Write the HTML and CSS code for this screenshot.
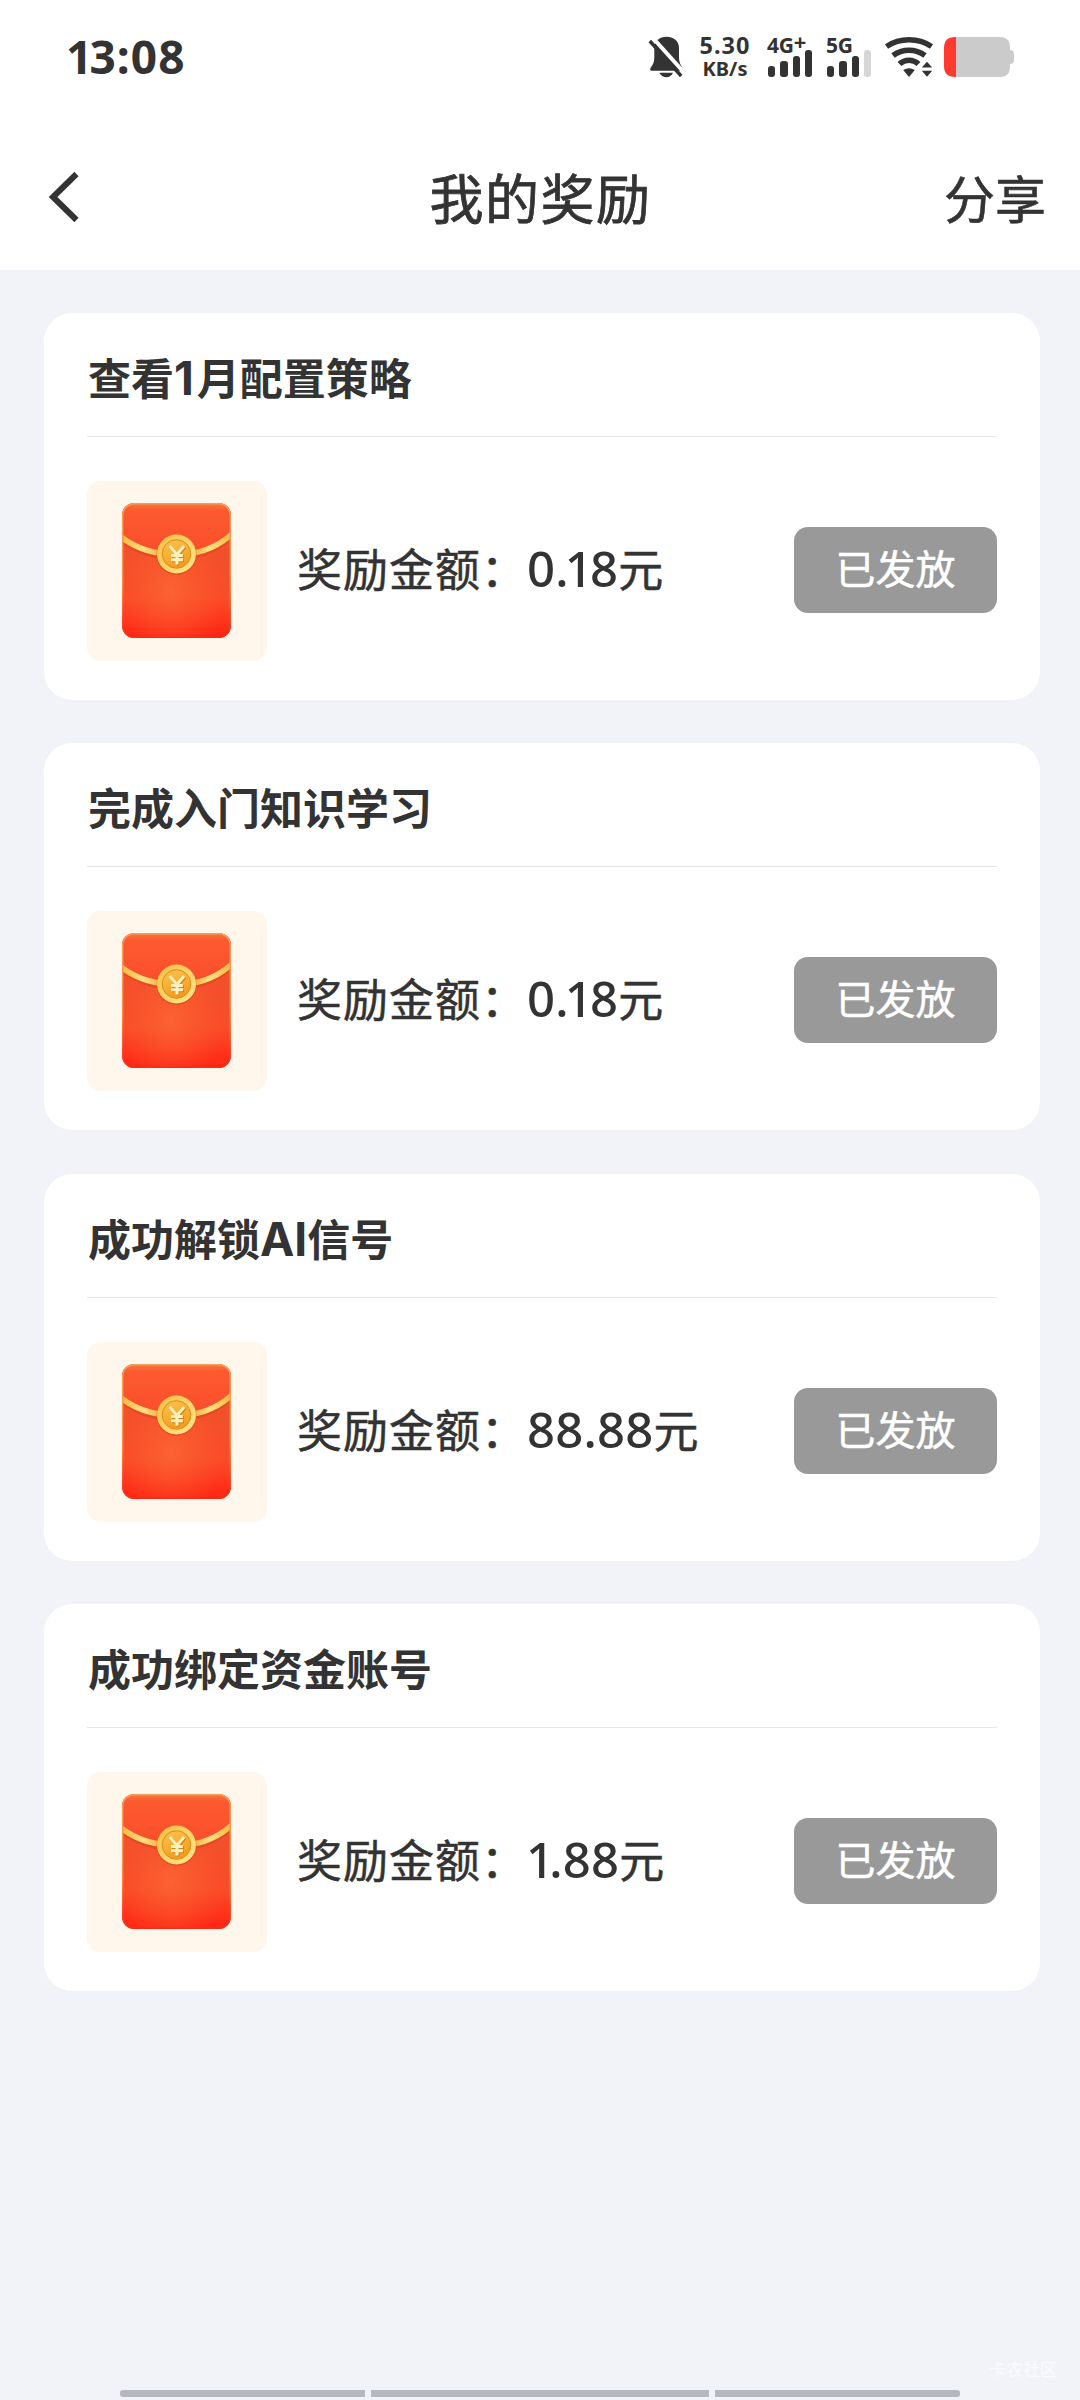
FILE: index.html
```html
<!DOCTYPE html>
<html lang="zh-CN">
<head>
<meta charset="utf-8">
<title>我的奖励</title>
<link rel="stylesheet" href="styles.css">
</head>
<body>
<svg class="defs" width="0" height="0" aria-hidden="true">
  <defs>
    <linearGradient id="env-base" x1="0" y1="0" x2="0" y2="1">
      <stop offset="0" stop-color="#f9602c"/>
      <stop offset=".35" stop-color="#f2502c"/>
      <stop offset=".7" stop-color="#fb4c28"/>
      <stop offset="1" stop-color="#ff2413"/>
    </linearGradient>
    <radialGradient id="env-glow" cx=".45" cy=".65" r=".5">
      <stop offset="0" stop-color="#fc6634" stop-opacity=".85"/>
      <stop offset="1" stop-color="#fa5a2c" stop-opacity="0"/>
    </radialGradient>
    <linearGradient id="env-flap" x1="0" y1="0" x2="0" y2="1">
      <stop offset="0" stop-color="#f6793c"/>
      <stop offset=".14" stop-color="#fd5a30"/>
      <stop offset="1" stop-color="#fa4e2b"/>
    </linearGradient>
    <linearGradient id="env-edge" x1="0" y1="0" x2="0" y2="1">
      <stop offset="0" stop-color="#f3a05c"/>
      <stop offset=".6" stop-color="#ff8a45"/>
      <stop offset="1" stop-color="#ff2a16"/>
    </linearGradient>
    <linearGradient id="band" x1="0" y1="0" x2="1" y2="0">
      <stop offset="0" stop-color="#f9b53c"/>
      <stop offset=".2" stop-color="#ffdf80"/>
      <stop offset=".35" stop-color="#f3b445"/>
      <stop offset=".66" stop-color="#f3b445"/>
      <stop offset=".8" stop-color="#ffdf80"/>
      <stop offset="1" stop-color="#f9b53c"/>
    </linearGradient>
    <linearGradient id="coin-rim" x1="0" y1="0" x2="1" y2="1">
      <stop offset="0" stop-color="#f5bd3c"/>
      <stop offset=".5" stop-color="#fbd367"/>
      <stop offset="1" stop-color="#ffe48a"/>
    </linearGradient>
    <linearGradient id="coin-face" x1="0" y1="0" x2=".4" y2="1">
      <stop offset="0" stop-color="#fbc552"/>
      <stop offset="1" stop-color="#f59c1d"/>
    </linearGradient>
    <clipPath id="env-clip"><rect width="109" height="135" rx="12"/></clipPath>
    <symbol id="envelope" viewBox="0 0 109 135">
      <g clip-path="url(#env-clip)">
        <rect width="109" height="135" fill="url(#env-base)"/>
        <rect width="109" height="135" fill="url(#env-glow)"/>
        <path d="M0 0H109V32Q85 51 54.500 51Q24 51 0 34Z" fill="url(#env-flap)"/>
        <path d="M-1 36Q22 54 54.500 54Q87 54 110 33" fill="none" stroke="#d8401c" stroke-opacity=".5" stroke-width="6"/>
        <path d="M-1 34Q22 51.500 54.500 51.500Q87 51.500 110 31" fill="none" stroke="url(#band)" stroke-width="5.500"/>
        <rect x=".7" y=".7" width="107.600" height="133.600" rx="11.500" fill="none" stroke="url(#env-edge)" stroke-width="1.400"/>
      </g>
      <circle cx="54.500" cy="51.800" r="20" fill="#b93b10" fill-opacity=".45"/>
      <circle cx="54.500" cy="51" r="19.500" fill="url(#coin-rim)"/>
      <circle cx="54.500" cy="51" r="14.300" fill="url(#coin-face)" stroke="#d88d1c" stroke-width="1"/>
      <path d="M47.800 43L55 51.500L62.200 43M55 51.500V61.500M49 52.500H61M49 56.800H61" transform="translate(1 1)" fill="none" stroke="#d67f12" stroke-width="2.800"/>
      <path d="M47.800 43L55 51.500L62.200 43M55 51.500V61.500M49 52.500H61M49 56.800H61" fill="none" stroke="#fff0bd" stroke-width="3"/>
    </symbol>
  </defs>
</svg>

<div class="screen">
  <header class="top">
    <div class="status">
      <span class="clock"><span class="one">1</span>3:08</span>
      <div class="indicators">
        <svg class="bell" viewBox="0 0 36 42">
          <path d="M18.500 .8C25.500 .8 31 5 31 12V21C31 27 33 29 34.500 32Q35 34.800 33 34.800H3.500Q1.500 34.800 2.500 32C4.500 29 6.300 27 6.300 21V12C6.300 5 11.500 .8 18.500 .8Z" fill="#333"/>
          <path d="M11.500 36.800H25Q23 41.200 18.300 41.200Q13.500 41.200 11.500 36.800Z" fill="#333"/>
          <path d="M4 1L37 37.500" stroke="#fff" stroke-width="4"/>
          <path d="M1.800 5L33.200 40" stroke="#333" stroke-width="3.400"/>
        </svg>
        <div class="speed"><span class="rate">5.30</span><span class="unit">KB/s</span></div>
        <div class="signal signal-a">
          <span>4G<sup>+</sup></span>
          <div class="bars"><i class="b1"></i><i class="b2"></i><i class="b3"></i><i class="b4"></i></div>
        </div>
        <div class="signal signal-b">
          <span>5G</span>
          <div class="bars"><i class="b1"></i><i class="b2"></i><i class="b3"></i><i class="b4 off"></i></div>
        </div>
        <svg class="wifi" viewBox="0 0 50 42">
          <g fill="none" stroke="#333" stroke-width="5.600">
            <path d="M2.500 10.500Q12.500 3.800 25 3.800Q37.500 3.800 47.500 10.500"/>
            <path d="M9 19.500Q16 14.200 25 14.200Q34 14.200 41 19.500"/>
            <path d="M15.500 28Q19.500 24.200 25 24.200Q30.500 24.200 34.500 28"/>
          </g>
          <path d="M19.200 34Q25 30.500 30.800 34L25 41Z M43 25.700L48.200 31.500H37.800Z M37.800 34.700H48.200L43 40.700Z" fill="#333"/>
        </svg>
        <svg class="battery" viewBox="0 0 70 40">
          <path d="M12 0H56Q66 0 66 11V13Q70 13 70 17V23Q70 27 66 27V29Q66 40 56 40H12Z" fill="#cbcbcb"/>
          <path d="M12 0V40H11Q0 40 0 29V11Q0 0 11 0Z" fill="#ff3b30"/>
        </svg>
      </div>
    </div>
    <nav class="nav">
      <svg class="back" viewBox="0 0 32 52"><path d="M28.500 3L5 26L28.500 49" fill="none" stroke="#333" stroke-width="6"/></svg>
      <h1>我的奖励</h1>
      <a class="share">分享</a>
    </nav>
  </header>

  <main class="list">
    <section class="card">
      <h2>查看<span class="latin digit">1</span>月配置策略</h2>
      <div class="row">
        <div class="tile"><svg class="envelope"><use href="#envelope"/></svg></div>
        <p class="amount">奖励金额：<b>0.<span class="one">1</span>8</b>元</p>
        <span class="badge">已发放</span>
      </div>
    </section>
    <section class="card">
      <h2>完成入门知识学习</h2>
      <div class="row">
        <div class="tile"><svg class="envelope"><use href="#envelope"/></svg></div>
        <p class="amount">奖励金额：<b>0.<span class="one">1</span>8</b>元</p>
        <span class="badge">已发放</span>
      </div>
    </section>
    <section class="card">
      <h2>成功解锁<span class="latin">AI</span>信号</h2>
      <div class="row">
        <div class="tile"><svg class="envelope"><use href="#envelope"/></svg></div>
        <p class="amount">奖励金额：<b>88.88</b>元</p>
        <span class="badge">已发放</span>
      </div>
    </section>
    <section class="card">
      <h2>成功绑定资金账号</h2>
      <div class="row">
        <div class="tile"><svg class="envelope"><use href="#envelope"/></svg></div>
        <p class="amount">奖励金额：<b><span class="lead">1</span>.88</b>元</p>
        <span class="badge">已发放</span>
      </div>
    </section>
  </main>

  <footer class="bottom">
    <span class="mark">卡农社区</span>
    <div class="gesture"><i></i><i></i><i></i></div>
  </footer>
</div>
</body>
</html>
```
FILE: styles.css
```css
* {
  box-sizing: border-box;
  margin: 0;
  padding: 0;
}

body {
  background: #f2f3f8;
  color: #333;
  font-family: "Noto Sans", "Noto Sans CJK SC", sans-serif;
}

.defs {
  position: absolute;
}

.screen {
  display: flex;
  flex-direction: column;
  width: 1080px;
  height: 2400px;
}

.top {
  height: 270px;
  background: #fff;
}

.status {
  display: flex;
  justify-content: space-between;
  height: 114px;
  padding: 0 66px;
}

.clock {
  font-size: 46px;
  font-weight: 700;
  line-height: 113px;
  letter-spacing: 1.100px;
}

.clock .one {
  margin-right: -4px;
}

.indicators {
  display: flex;
  align-items: flex-start;
  padding-top: 36px;
}

.bell {
  width: 36px;
  height: 42px;
}

.speed {
  display: flex;
  flex-direction: column;
  align-items: center;
  width: 54px;
  margin-left: 14px;
  font-weight: 700;
}

.rate {
  font-size: 23.500px;
  line-height: 19px;
  letter-spacing: 1px;
}

.unit {
  font-size: 20px;
  line-height: 27px;
}

.signal {
  display: flex;
  flex-direction: column;
  font-size: 21px;
  font-weight: 700;
  line-height: 19px;
}

.signal span {
  height: 14px;
  letter-spacing: -.3px;
  white-space: nowrap;
}

.signal sup {
  position: relative;
  top: -3px;
  font-size: 22px;
  line-height: 0;
  vertical-align: baseline;
}

.signal-a {
  width: 45px;
  margin-left: 15px;
}

.signal-b {
  width: 45px;
  margin-left: 14px;
}

.bars {
  display: flex;
  align-items: flex-end;
  gap: 5px;
  height: 27px;
  padding-left: 1px;
}

.bars i {
  width: 7.300px;
  border-radius: 3px;
  background: #333;
}

.bars .b1 { height: 11px; }
.bars .b2 { height: 16px; }
.bars .b3 { height: 21px; }
.bars .b4 { height: 27px; }
.bars .off { background: #d6d6d6; }

.wifi {
  width: 50px;
  height: 42px;
  margin-left: 13px;
}

.battery {
  width: 70px;
  height: 40px;
  margin: 1px 0 0 10px;
}

.nav {
  display: grid;
  grid-template-columns: 200px 1fr 200px;
  align-items: center;
  height: 156px;
  padding: 0 34px 0 48px;
}

.back {
  width: 32px;
  height: 52px;
  margin-top: 10px;
}

h1 {
  padding: 13px 13px 0 0;
  font-size: 54px;
  font-weight: 400;
  line-height: 80px;
  letter-spacing: 1.500px;
  text-align: center;
  -webkit-text-stroke: .8px #333;
}

.share {
  padding-top: 14px;
  font-size: 51px;
  line-height: 80px;
  text-align: right;
  -webkit-text-stroke: .6px #333;
}

.list {
  display: flex;
  flex-direction: column;
  gap: 43.330px;
  padding: 43px 40px 0 44px;
}

.card {
  height: 387px;
  padding: 0 43px;
  border-radius: 28px;
  background: #fff;
}

h2 {
  height: 124px;
  padding-left: 1px;
  border-bottom: 1px solid #e6e6e6;
  font-size: 43px;
  font-weight: 700;
  line-height: 132px;
}

.latin {
  font-family: Inter, sans-serif;
  font-size: 46px;
  line-height: 1;
  letter-spacing: 0;
}

.digit {
  margin-right: 3px;
}

.row {
  display: flex;
  align-items: center;
  height: 268px;
}

.tile {
  display: flex;
  align-items: center;
  justify-content: center;
  width: 180px;
  height: 180px;
  padding: 0 2px 1px 0;
  border-radius: 14px;
  background: #fff6ec;
}

.envelope {
  width: 109px;
  height: 135px;
}

.amount {
  flex: 1;
  padding: 0 0 4px 30px;
  font-size: 45px;
  line-height: 80px;
  letter-spacing: 1px;
  -webkit-text-stroke: .5px #333;
}

.amount b {
  font-size: 49px;
  font-weight: 500;
  letter-spacing: .2px;
  -webkit-text-stroke: 0;
}

.amount .one {
  margin: 0 -3px 0 -4px;
}

.amount .lead {
  margin: 0 -5px 0 -1px;
}

.badge {
  width: 203px;
  height: 86px;
  margin-bottom: 2px;
  border-radius: 14px;
  background: #999;
  color: #fff;
  font-size: 40px;
  line-height: 84px;
  text-align: center;
  -webkit-text-stroke: .5px #fff;
}

.bottom {
  display: flex;
  flex-direction: column;
  justify-content: space-between;
  height: 44px;
  margin-top: auto;
  padding: 0 120px 3px;
}

.mark {
  align-self: flex-end;
  margin-right: -97px;
  color: #fafbfd;
  font-size: 17px;
  line-height: 28px;
}

.gesture {
  display: grid;
  grid-template-columns: 245px 338px 245px;
  gap: 6px;
  height: 7px;
}

.gesture i {
  background: #b6b8c0;
}

.gesture i:first-child {
  border-radius: 3px 0 0 3px;
}

.gesture i:last-child {
  border-radius: 0 3px 3px 0;
}
```
